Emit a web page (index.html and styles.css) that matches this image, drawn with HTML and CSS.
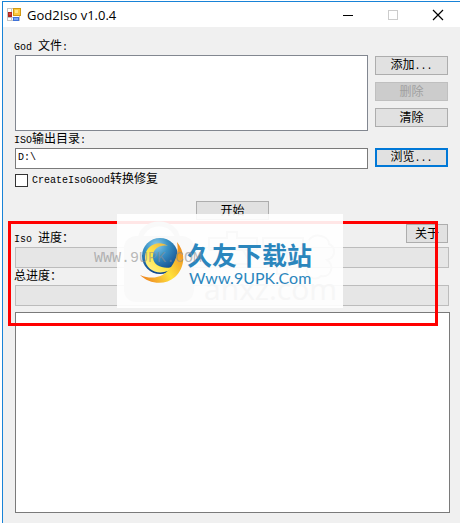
FILE: index.html
```html
<!DOCTYPE html>
<html lang="zh-CN">
<head>
  <meta charset="UTF-8">
  <meta name="viewport" content="width=device-width, initial-scale=1.0">
  <title>God2Iso v1.0.4</title>
  <link rel="stylesheet" href="styles.css">
</head>
<body>
  <div class="window">
    <header class="titlebar">
      <svg class="app-icon" width="14" height="14" viewBox="0 0 14 14" shape-rendering="crispEdges">
        <rect x="0.5" y="0.5" width="12" height="12" fill="#fff" stroke="#c4c4c4"/>
        <path d="M4.5 0V13M0 9.5H13" stroke="#c4c4c4"/>
        <rect x="1" y="4" width="4" height="5" fill="#b3261e"/>
        <rect x="2" y="5" width="2" height="2" fill="#d2483c"/>
        <rect x="6" y="0" width="8" height="8" fill="#d29a12"/>
        <rect x="7" y="1" width="6" height="6" fill="#fbc93d"/>
        <rect x="8" y="2" width="3" height="3" fill="#ffe48a"/>
        <rect x="6" y="9" width="6" height="4" fill="#3f72d8"/>
        <rect x="7" y="10" width="4" height="2" fill="#7ba6f2"/>
      </svg>
      <h1>God2Iso v1.0.4</h1>
      <div class="window-controls">
        <button type="button" aria-label="最小化"><svg width="12" height="12" viewBox="0 0 12 12"><path d="M1 6.5H11" stroke="#000"/></svg></button>
        <button type="button" aria-label="最大化" disabled><svg width="12" height="12" viewBox="0 0 12 12"><rect x="1.5" y="1.5" width="9" height="9" fill="none" stroke="#ccc"/></svg></button>
        <button type="button" aria-label="关闭"><svg width="12" height="12" viewBox="0 0 12 12"><path d="M1 1L11 11M11 1L1 11" stroke="#000" stroke-width="1.2"/></svg></button>
      </div>
    </header>

    <form class="content">
      <label class="caption" for="files"><span class="en">God </span>文件<span class="en">:</span></label>
      <div class="row">
        <select class="file-list" id="files" size="4"></select>
        <div class="file-buttons">
          <button class="btn" type="button">添加<span class="en">...</span></button>
          <button class="btn" type="button" disabled>删除</button>
          <button class="btn" type="button">清除</button>
        </div>
      </div>

      <label class="caption" for="output"><span class="en">ISO</span>输出目录<span class="en">:</span></label>
      <div class="row output-row">
        <input class="path" type="text" id="output" value="D:\">
        <button class="btn focused" type="button">浏览<span class="en">...</span></button>
      </div>

      <label class="check"><input type="checkbox"><span><span class="en">CreateIsoGood</span>转换修复</span></label>

      <button class="btn start" type="button">开始</button>

      <div class="about-row">
        <span class="caption" id="iso-label"><span class="en">Iso </span>进度：</span>
        <button class="btn about" type="button">关于</button>
      </div>
      <div class="bar" role="progressbar" aria-labelledby="iso-label"></div>
      <span class="caption" id="total-label">总进度：</span>
      <div class="bar" role="progressbar" aria-labelledby="total-label"></div>

      <textarea class="log" aria-label="Log" readonly></textarea>
    </form>

    <div class="highlight"></div>

    <div class="banner">
      <svg class="shapes" width="226" height="94" viewBox="0 0 226 94">
        <defs>
          <radialGradient id="globe" cx="0.4" cy="0.2" r="0.8">
            <stop offset="0" stop-color="#8ccbe8"/>
            <stop offset="0.4" stop-color="#3a93c6"/>
            <stop offset="1" stop-color="#0c4488"/>
          </radialGradient>
          <linearGradient id="swirl" x1="0" y1="0.8" x2="1" y2="0.2">
            <stop offset="0" stop-color="#ee8420"/>
            <stop offset="0.5" stop-color="#ffe23c"/>
            <stop offset="1" stop-color="#ee8d20"/>
          </linearGradient>
          <linearGradient id="crescent" x1="1" y1="0" x2="0" y2="1">
            <stop offset="0" stop-color="#e9a63a"/>
            <stop offset="0.6" stop-color="#ffe84a"/>
            <stop offset="1" stop-color="#fff3a0"/>
          </linearGradient>
        </defs>
        <!-- pale bag and outlined shapes behind the logo -->
        <g class="ghost">
          <rect x="7" y="22" width="70" height="66" rx="12"/>
          <path class="ghost-line" d="M23 28C23 4 61 4 61 28"/>
        </g>
        <g class="ghost-outline">
          <path d="M92 36V24H110V18H120V24H140V36M92 36H140M104 36L98 50H134L126 36"/>
          <path d="M146 24H186V34H170V60H160V34H146Z"/>
          <path d="M192 26C198 18 212 22 212 30C220 34 218 44 210 46C218 52 214 64 204 62C198 68 188 62 190 54"/>
        </g>
        <circle cx="43" cy="42" r="18" fill="url(#globe)"/>
        <path d="M51 32C41 25 27 32 28 45C29 58 46 64 58 52C49 56 37 53 36 44C35 35 43 30 51 32Z" fill="url(#crescent)"/>
        <path d="M60 28C70 40 67 55 58 63C48 72 32 70 23 61C37 67 48 62 54 53C59 46 62 38 60 28Z" fill="url(#swirl)"/>
      </svg>
      <span class="ghost-name">anxz.com</span>
      <div class="brand">
        <strong>久友下载站</strong>
        <span>Www.9UPK.Com</span>
      </div>
    </div>
    <span class="stamp">WWW.9UPK.COM</span>
  </div>
</body>
</html>
```
FILE: styles.css
```css
* {
  box-sizing: border-box;
}
body {
  margin: 0;
  padding: 1px 0 0 2px;
  background: #fff;
  color: #000;
  font-family: "Liberation Sans", "Noto Sans CJK SC", sans-serif;
  font-size: 12px;
  line-height: 16px;
}
button, input, select, textarea {
  font: inherit;
  color: inherit;
  margin: 0;
}
.window {
  position: relative;
  display: flex;
  flex-direction: column;
  min-height: calc(100vh - 1px);
  border-top: 1px solid #1883d7;
  border-left: 1px solid #1883d7;
  background: #f0f0f0;
}

/* title bar */
.titlebar {
  display: flex;
  align-items: center;
  height: 25px;
  padding-left: 4px;
  background: #fff;
}
.titlebar h1 {
  margin: 0 0 0 6px;
  font-family: "Open Sans", "Noto Sans", sans-serif;
  font-size: 13px;
  font-weight: normal;
}
.window-controls {
  display: flex;
  margin-left: auto;
}
.window-controls button {
  display: flex;
  align-items: center;
  justify-content: center;
  width: 45px;
  height: 25px;
  padding: 0;
  border: 0;
  background: none;
}

/* form */
.content {
  display: flex;
  flex: 1;
  flex-direction: column;
  padding: 11px 10px 10px 12px;
}
.en {
  font-family: "Liberation Mono", monospace;
  font-size: 10px;
  white-space: pre;
}
.caption {
  height: 17px;
  margin-left: -1px;
  line-height: 17px;
}
.row {
  display: flex;
  gap: 7px;
  padding-right: 2px;
}
.file-list {
  flex: 1;
  min-width: 0;
  height: 76px;
  border: 1px solid #828790;
  border-radius: 0;
  background: #fff;
}
.file-buttons {
  display: flex;
  flex-direction: column;
  gap: 7px;
  padding-top: 1px;
}
.btn {
  width: 73px;
  height: 19px;
  padding: 0;
  border: 1px solid #adadad;
  background: #e1e1e1;
  line-height: 16px;
}
.btn:disabled {
  border-color: #bfbfbf;
  background: #ccc;
  color: #a0a0a0;
}
.btn.focused {
  border: 2px solid #0078d7;
  line-height: 14px;
}
.output-row {
  align-items: flex-start;
}
.path {
  flex: 1;
  min-width: 0;
  height: 21px;
  padding: 0 2px 2px;
  border: 1px solid #7a7a7a;
  font-family: "Liberation Mono", monospace;
  font-size: 10px;
}
.check {
  display: flex;
  align-items: center;
  align-self: flex-start;
  gap: 4px;
  margin-top: 2px;
}
.check input {
  width: 13px;
  height: 13px;
  appearance: none;
  border: 1px solid #333;
  background: #fff;
}
.start {
  align-self: center;
  margin-top: 12px;
}
.about-row {
  display: flex;
  align-items: flex-end;
  justify-content: space-between;
  height: 27px;
  padding: 0 2px 4px 0;
}
.about-row .caption {
  margin-bottom: -4px;
}
.about {
  width: 42px;
}
.bar {
  height: 21px;
  margin-right: 1px;
  border: 1px solid #bcbcbc;
  background: #e6e6e6;
}
.log {
  flex: 1;
  min-height: 100px;
  margin-top: 6px;
  border: 1px solid #7a7a7a;
  background: #fff;
  resize: none;
}

/* layers over the form */
.highlight {
  position: absolute;
  top: 219px;
  left: 5px;
  right: 22px;
  height: 105px;
  border: 3px solid #f00;
}
.banner {
  position: absolute;
  top: 212px;
  left: 114px;
  width: 226px;
  height: 94px;
  background: rgba(255, 255, 255, 0.9);
}
.shapes {
  display: block;
}
.ghost {
  fill: #f9f9f9;
}
.ghost-line {
  fill: none;
  stroke: #f9f9f9;
  stroke-width: 5;
}
.ghost-outline {
  fill: none;
  stroke: #f9f9f9;
  stroke-width: 2;
}
.ghost-name {
  position: absolute;
  right: 6px;
  bottom: 4px;
  color: #f6f6f6;
  font-family: "Open Sans", sans-serif;
  font-size: 30px;
  line-height: 30px;
}
.brand {
  position: absolute;
  top: 26px;
  left: 70px;
  color: #2b86bd;
  white-space: nowrap;
}
.brand strong {
  display: block;
  font-family: "Noto Sans CJK SC", sans-serif;
  font-size: 25px;
  line-height: 28px;
}
.brand span {
  display: block;
  padding-left: 2px;
  font-family: Lato, sans-serif;
  font-size: 16px;
  line-height: 20px;
}
.stamp {
  position: absolute;
  top: 249px;
  left: 91px;
  color: rgba(140, 140, 140, 0.6);
  font-family: "Liberation Mono", monospace;
  font-size: 15px;
}
```
